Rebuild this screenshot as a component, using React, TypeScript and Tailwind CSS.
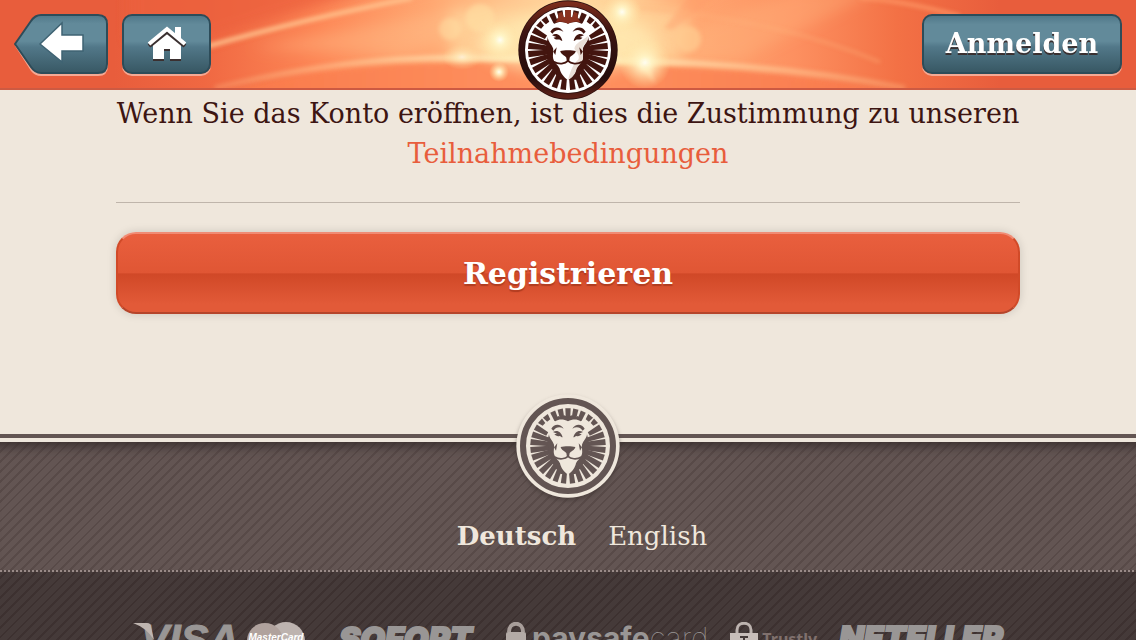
import React from "react";

const RAYS = [
  { angle: 0, inner: 70 },
  { angle: 12, inner: 70 },
  { angle: 24, inner: 74 },
  { angle: 37, inner: 96 },
  { angle: 48, inner: 97 },
  { angle: 60, inner: 72 },
  { angle: 72, inner: 54 },
  { angle: 84, inner: 40 },
  { angle: 96, inner: 36 },
  { angle: 108, inner: 34 },
  { angle: 121, inner: 34 },
  { angle: 134, inner: 34 },
  { angle: 147, inner: 34 },
  { angle: 160, inner: 40 },
  { angle: 173, inner: 60 },
];

type LionProps = {
  dark: string;
  light: string;
  shade?: string;
};

// lion head, centred on 0,0 with the mane reaching a radius of 113
function Lion({ dark, light, shade }: LionProps) {
  const rays = RAYS.flatMap((ray) =>
    ray.angle === 0 ? [ray] : [ray, { ...ray, angle: -ray.angle }]
  );
  return (
    <g>
      {rays.map((ray) => (
        <path
          key={ray.angle}
          d={
            Math.abs(ray.angle) < 30 || Math.abs(ray.angle) > 150
              ? `M-8,-113 L8,-113 L6,${-ray.inner} L-6,${-ray.inner} Z`
              : `M-9,-113 L9,-113 L6,${-ray.inner} L-6,${-ray.inner} Z`
          }
          transform={`rotate(${ray.angle})`}
          fill={dark}
        />
      ))}
      <path
        d="M-40,-78 L-30,-90 L-20,-86 L-10,-92 L0,-86 L10,-92 L20,-86 L30,-90 L40,-78 L30,-66 H-30 Z"
        fill={dark}
      />
      <path
        d="M-56,-40 L-62,-14 L-58,8 L-58,32 L-48,48 L-36,68 L-22,84 L22,84 L36,68 L48,48 L58,32 L58,8 L62,-14 L56,-40 Z"
        fill={dark}
      />
      <path
        d="M-64,-60 C-66,-74 -50,-80 -38,-74 C-26,-82 -12,-80 0,-74 C12,-80 26,-82 38,-74 C50,-80 66,-74 64,-60 C64,-50 56,-46 57,-36 C57,-24 46,-16 42,-4 C41,6 44,16 42,24 C38,38 28,42 24,52 C22,64 12,78 0,86 C-12,78 -22,64 -24,52 C-28,42 -38,38 -42,24 C-44,16 -41,6 -42,-4 C-46,-16 -57,-24 -57,-36 C-56,-46 -64,-50 -64,-60 Z"
        fill={light}
      />
      {shade && (
        <path
          d="M56,-40 C40,-24 22,-22 18,-4 C22,6 34,12 30,26 C20,36 10,46 0,84 C14,78 22,66 24,54 C28,44 38,38 42,26 C44,10 38,-4 46,-16 C56,-24 56,-30 56,-40 Z"
          fill={shade}
        />
      )}
      <g fill={dark}>
        <path d="M-50,-52 C-42,-68 -22,-68 -13,-52 C-24,-59 -36,-58 -44,-46 Z" />
        <path d="M50,-52 C42,-68 22,-68 13,-52 C24,-59 36,-58 44,-46 Z" />
        <path d="M-45,-42 C-32,-50 -20,-42 -16,-26 C-20,-26 -22,-29 -25,-30 C-32,-28 -37,-31 -41,-35 L-33,-37 Z" />
        <path d="M45,-42 C32,-50 20,-42 16,-26 C20,-26 22,-29 25,-30 C32,-28 37,-31 41,-35 L33,-37 Z" />
        <path d="M-22,3 C-12,0 12,0 22,3 C20,13 9,16 5,21 L3,33 L-3,33 L-5,21 C-9,16 -20,13 -22,3 Z" />
        <path d="M-42,4 L-32,-8 L-36,14 Z" />
        <path d="M42,4 L32,-8 L36,14 Z" />
      </g>
      <path
        d="M-40,33 C-26,42 -8,39 0,31 C8,39 26,42 40,33"
        fill="none"
        stroke={dark}
        strokeWidth="5"
      />
    </g>
  );
}

function HeaderGlow() {
  return (
    <svg
      className="absolute inset-0 h-full w-full"
      viewBox="0 0 1136 88"
      preserveAspectRatio="none"
      aria-hidden="true"
    >
      <defs>
        <linearGradient id="base">
          <stop offset="0.1" stopColor="#e85d3c" />
          <stop offset="0.18" stopColor="#f06842" />
          <stop offset="0.28" stopColor="#fd8756" />
          <stop offset="0.38" stopColor="#ffa771" />
          <stop offset="0.45" stopColor="#ffc58d" />
          <stop offset="0.5" stopColor="#ffdca2" />
          <stop offset="0.55" stopColor="#ffcf95" />
          <stop offset="0.61" stopColor="#ffa771" />
          <stop offset="0.7" stopColor="#fd9060" />
          <stop offset="0.79" stopColor="#f37145" />
          <stop offset="0.88" stopColor="#e85d3c" />
        </linearGradient>
        <linearGradient id="beam">
          <stop offset="0" stopColor="#ffbb85" stopOpacity="0.3" />
          <stop offset="0.5" stopColor="#fff3c4" />
          <stop offset="1" stopColor="#ffb982" stopOpacity="0.4" />
        </linearGradient>
        <linearGradient id="floor">
          <stop offset="0" stopColor="#f97849" />
          <stop offset="0.5" stopColor="#ff9361" />
          <stop offset="1" stopColor="#f8774a" />
        </linearGradient>
        <radialGradient id="spark">
          <stop offset="0" stopColor="#fffef4" />
          <stop offset="0.25" stopColor="#fff6c8" stopOpacity="0.9" />
          <stop offset="1" stopColor="#ffe2a0" stopOpacity="0" />
        </radialGradient>
        <filter id="soft" x="-20%" y="-50%" width="140%" height="200%">
          <feGaussianBlur stdDeviation="2" />
        </filter>
        <filter id="wide" x="-20%" y="-50%" width="140%" height="200%">
          <feGaussianBlur stdDeviation="7" />
        </filter>
      </defs>
      <rect width="1136" height="88" fill="url(#base)" />
      <path d="M130,-20 H400 L210,40 H130 Z" fill="#ec613d" opacity="0.8" filter="url(#wide)" />
      <g filter="url(#wide)">
        <path d="M250,48 L560,-10 H600 L400,56 Z" fill="#ffcd97" opacity="0.3" />
        <path d="M610,60 L800,-10 L880,-10 L740,60 Z" fill="#ffbd86" opacity="0.3" />
        <path d="M450,10 H690 L680,60 L450,60 Z" fill="#ffe3a8" opacity="0.5" />
      </g>
      <g filter="url(#soft)">
        <path d="M215,94 C350,62 420,63 520,62 C700,65 800,74 905,94 Z" fill="url(#floor)" />
        <path d="M664,28 L690,-5 L720,-5 L672,30 Z" fill="#ff9b66" opacity="0.4" />
        <path d="M205,47 Q300,20 412,-2" fill="none" stroke="#ffc48f" strokeWidth="4" />
        <path d="M640,8 Q780,20 880,62" fill="none" stroke="#ffb37c" strokeWidth="2" opacity="0.6" />
        <path d="M860,-2 Q900,0 960,16" fill="none" stroke="#ff9a68" strokeWidth="3" />
        <circle cx="480" cy="18" r="14" fill="#ffdfa4" opacity="0.6" />
        <circle cx="450" cy="29" r="11" fill="#ffdfa4" opacity="0.5" />
        <circle cx="688" cy="39" r="13" fill="#ffcc90" opacity="0.7" />
      </g>
      <path
        d="M215,88 C350,56 420,57 520,58 C700,60 800,68 905,88"
        fill="none"
        stroke="url(#beam)"
        strokeWidth="5"
        filter="url(#soft)"
      />
      <ellipse cx="568" cy="44" rx="90" ry="30" fill="#ffefb8" opacity="0.6" filter="url(#wide)" />
      <circle cx="500" cy="40" r="20" fill="url(#spark)" />
      <circle cx="499" cy="72" r="10" fill="url(#spark)" />
      <ellipse cx="462" cy="57" rx="20" ry="13" fill="url(#spark)" opacity="0.6" />
      <circle cx="645" cy="63" r="26" fill="url(#spark)" />
      <circle cx="622" cy="12" r="20" fill="url(#spark)" />
      <path d="M641,66 L655,84 L649,64 Z" fill="#fff2c0" opacity="0.5" filter="url(#soft)" />
    </svg>
  );
}

function Header() {
  return (
    <header className="relative z-10 border-b-2 border-[#cd5a42] bg-[#e85d3c]">
      <HeaderGlow />
      <div className="relative flex items-start gap-3.5 px-3.5 pt-3.5 pb-3">
        <a href="#back" aria-label="Zurück">
          <svg width="94" height="62" viewBox="0 0 94 62">
            <defs>
              <linearGradient id="steel" x1="0" y1="0" x2="0" y2="1">
                <stop offset="0" stopColor="#507889" />
                <stop offset="0.15" stopColor="#628a9a" />
                <stop offset="0.45" stopColor="#628a9a" />
                <stop offset="0.55" stopColor="#527889" />
                <stop offset="1" stopColor="#385864" />
              </linearGradient>
            </defs>
            <path d="M1,32 L17,8 Q21,2 27,2 H84 Q94,2 94,12 V52 Q94,62 84,62 H27 Q21,62 17,57 Z" fill="#f5a994" />
            <path
              d="M1,30 L17,7 Q21,1 27,1 H84 Q93,1 93,10 V50 Q93,59 84,59 H27 Q21,59 17,53 Z"
              fill="url(#steel)"
              stroke="#2d4c59"
              strokeWidth="2"
            />
            <path d="M26,30 L48,9 V21 H69 V37 H48 V48 Z" fill="#fff" stroke="#3f6373" strokeWidth="1.5" />
          </svg>
        </a>
        <a
          href="#home"
          aria-label="Startseite"
          className="flex h-[60px] w-[89px] items-center justify-center rounded-[10px] border-2 border-[#2d4c59] bg-[linear-gradient(#507889,#628a9a_15%,#628a9a_45%,#527889_55%,#385864)] shadow-[0_2px_0_#f5a994]"
        >
          <svg width="40" height="36" viewBox="0 0 40 36">
            <g transform="translate(0 2)">
              <path d="M6,18 L20,7 L34,18 V33 H23 V23 H17 V33 H6 Z" fill="#3b3030" />
              <path d="M2,18 L20,3 L38,18" fill="none" stroke="#3b3030" strokeWidth="4" />
            </g>
            <path d="M6,18 L20,7 L34,18 V33 H23 V23 H17 V33 H6 Z" fill="#fff" />
            <path d="M28,1 H34 V14 L28,9 Z" fill="#fff" />
            <path d="M4,20 L20,7 L36,20" fill="none" stroke="#3b3030" strokeWidth="2" />
            <path d="M2,18 L20,3 L38,18" fill="none" stroke="#fff" strokeWidth="4" />
          </svg>
        </a>
        <a
          href="#login"
          className="ml-auto flex h-[60px] w-[200px] items-center justify-center rounded-[10px] border-2 border-[#2d4c59] bg-[linear-gradient(#507889,#628a9a_15%,#628a9a_45%,#527889_55%,#385864)] text-[27px] font-bold text-white shadow-[0_2px_0_#f5a994] text-shadow-[0_2px_0_#3b3030]"
        >
          Anmelden
        </a>
      </div>
      <a href="#top" aria-label="LeoVegas" className="absolute top-0 left-1/2 -translate-x-1/2">
        <svg width="100" height="100" viewBox="-150 -150 300 300">
          <defs>
            <linearGradient id="rim" x1="0" y1="0" x2="0" y2="1">
              <stop offset="0" stopColor="#7a2c1c" />
              <stop offset="0.3" stopColor="#3d1512" />
              <stop offset="0.8" stopColor="#240c0c" />
              <stop offset="1" stopColor="#5c2018" />
            </linearGradient>
          </defs>
          <circle r="149" fill="#2b0e0d" />
          <circle r="139" fill="none" stroke="url(#rim)" strokeWidth="15" />
          <circle r="129" fill="#fff" />
          <g transform="scale(1.06)">
            <Lion dark="#43150f" light="#fff" shade="#e9ded6" />
            <path
              d="M-36,-78 L-28,-90 L-27,-104 L-17,-108 L-12,-92 L-8,-94 V-113 H8 V-94 L12,-92 L17,-108 L27,-104 L28,-90 L36,-78 C26,-81 12,-80 0,-74 C-12,-80 -26,-81 -36,-78 Z"
              fill="#8a3220"
            />
          </g>
        </svg>
      </a>
    </header>
  );
}

function PaymentLogos() {
  return (
    <ul className="flex items-start justify-center gap-[22px] pt-[50px] leading-none text-[#999695]">
      <li className="flex items-start gap-2">
        <div className="relative pl-2">
          <svg className="absolute top-0 left-0" width="24" height="30" viewBox="0 0 24 30">
            <path d="M0,1 H14 Q18,1 18,5 L21,18 Q14,6 0,1 Z" fill="#bfb5b0" />
          </svg>
          <span className="block font-['Liberation_Sans',sans-serif] text-[42px] leading-[36px] font-bold italic [-webkit-text-stroke:1px]">
            VISA
          </span>
        </div>
        <div className="relative flex w-[58px] justify-center pt-2">
          <svg className="absolute top-0 left-0" width="58" height="38" viewBox="0 0 58 38">
            <circle cx="39" cy="19" r="19" fill="#bdb3af" />
            <circle cx="18" cy="19" r="18" fill="#b0a29d" />
          </svg>
          <span className="relative font-['Liberation_Sans',sans-serif] text-[10px] leading-[16px] font-bold text-white italic">
            MasterCard
          </span>
        </div>
      </li>
      <li className="px-3 font-['Inter',sans-serif] text-[32px] leading-[34px] font-black italic [-webkit-text-stroke:2px]">
        SOFORT
      </li>
      <li className="flex items-start gap-1.5">
        <svg width="20" height="36" viewBox="0 0 20 36">
          <path d="M3,10 C3,-1 17,-1 17,10" fill="none" stroke="#a89e9a" strokeWidth="4" />
          <rect x="0" y="10" width="20" height="22" rx="2" fill="#b3aaa6" />
        </svg>
        <span className="font-['Inter',sans-serif] text-[30px] leading-[32px] font-bold">
          paysafe<span className="font-thin">card</span>
        </span>
      </li>
      <li className="flex items-start gap-1">
        <svg width="28" height="34" viewBox="0 0 28 34">
          <path d="M7,12 V8 C7,-1 21,-1 21,8 V12" fill="none" stroke="#bdb3af" strokeWidth="3" />
          <path d="M0,11 H28 V26 Q14,38 0,26 Z" fill="#c8beba" />
          <path d="M10,15 H18 M14,15 V24" stroke="#453a39" strokeWidth="2" />
        </svg>
        <span className="pt-2 font-['Noto_Sans',sans-serif] text-[16px] leading-[18px] font-bold text-[#7f706d]">
          Trustly
        </span>
      </li>
      <li className="font-['Inter',sans-serif] text-[32px] leading-[32px] font-black italic [-webkit-text-stroke:2px]">
        NETELLER
      </li>
    </ul>
  );
}

function Footer() {
  return (
    <footer className="relative border-t-4 border-[#635553] pt-1">
      <div className="bg-[#635553] bg-[repeating-linear-gradient(-45deg,transparent_0_5px,#584a48_5px_7px)]">
        <div className="flex items-center justify-center gap-8 pt-[72px] pb-3 pl-7 text-[26px] leading-[44px] text-[#efe7dc] shadow-[inset_0_16px_12px_-12px_#3a2f2e]">
          <a href="#de" className="font-bold">
            Deutsch
          </a>
          <a href="#en">English</a>
        </div>
        <div className="h-0.5 bg-[repeating-linear-gradient(90deg,#9a8b88_0_2px,#4e4240_2px_4px)]" />
      </div>
      <div className="bg-[#453a39] bg-[repeating-linear-gradient(-45deg,transparent_0_5px,#3d3130_5px_7px)] pb-10">
        <PaymentLogos />
      </div>
      <svg
        className="absolute -top-11 left-1/2 -translate-x-1/2 overflow-visible drop-shadow-[0_3px_2px_#3a2f2e80]"
        width="104"
        height="104"
        viewBox="-156 -156 312 312"
        aria-hidden="true"
      >
        <circle r="155" fill="#efe7dc" />
        <circle r="135" fill="none" stroke="#635553" strokeWidth="18" />
        <Lion dark="#635553" light="#efe7dc" />
      </svg>
    </footer>
  );
}

function App() {
  return (
    <div className="h-screen overflow-hidden bg-[#efe7dc] font-['DejaVu_Serif',serif]">
      <Header />
      <main className="px-[116px] pt-1 pb-[120px]">
        <p className="border-b border-[#bfb5ab] pb-7 text-center text-[27px] leading-[40px] text-[#3d1512]">
          Wenn Sie das Konto eröffnen, ist dies die Zustimmung zu unseren{" "}
          <a href="#terms" className="text-[#e85d3c]">
            Teilnahmebedingungen
          </a>
        </p>
        <button
          type="button"
          className="mt-[29px] h-[82px] w-full cursor-pointer rounded-[20px] border-2 border-x-[#d14a28] border-t-[#f08b74] border-b-[#b5452b] bg-[linear-gradient(#e95f3e,#e05634_50%,#d04827_51%,#e25a38_90%)] text-[30px] font-bold text-white shadow-[0_0_10px_#00000026] text-shadow-[0_2px_1px_#b03c20]"
        >
          Registrieren
        </button>
      </main>
      <Footer />
    </div>
  );
}

export default App;
